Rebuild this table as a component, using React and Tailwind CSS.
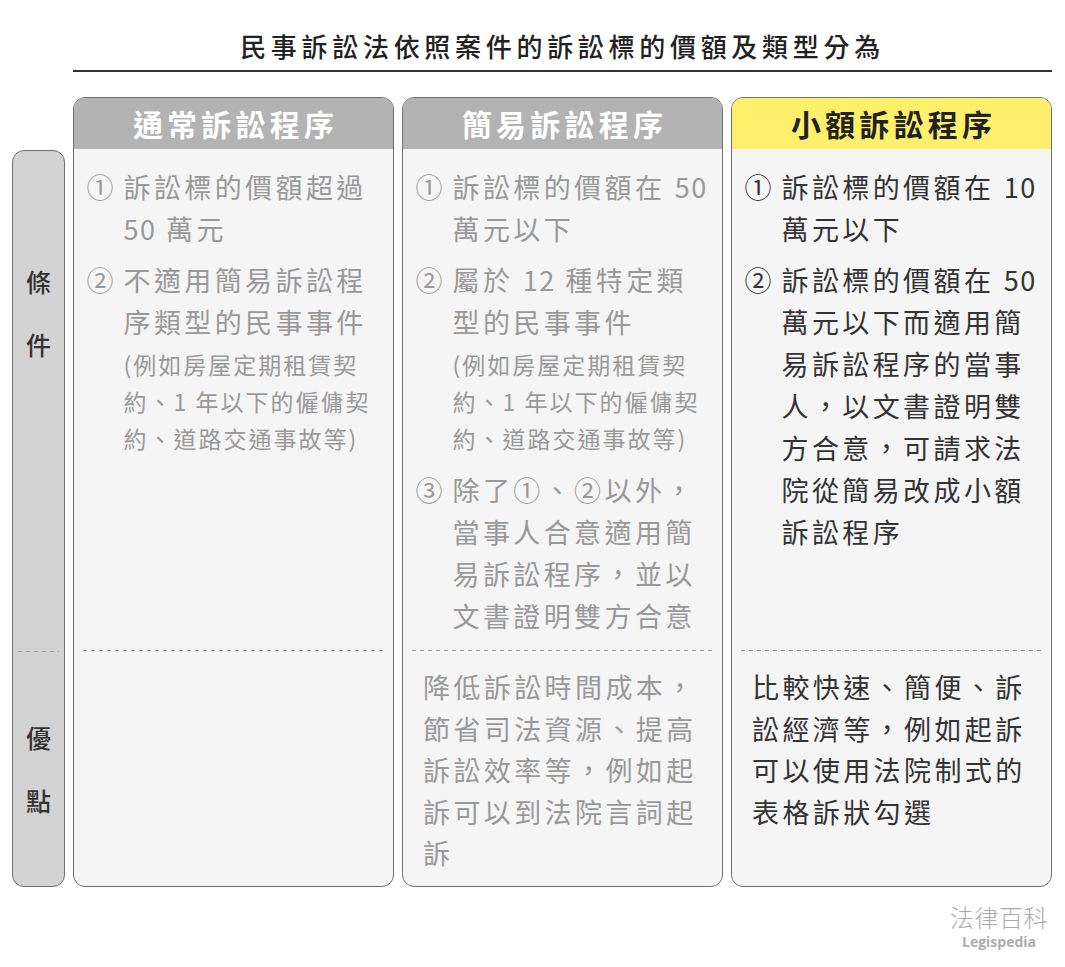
import React from "react";

const FONT = { fontFamily: '"Noto Sans CJK TC", "Noto Sans", sans-serif' };

function Lines({ lines }) {
  return (
    <div>
      {lines.map((l, i) => (
        <div key={i} className="whitespace-nowrap">{l}</div>
      ))}
    </div>
  );
}

const Num = ({ children }) => <span className="tracking-[1.6px]">{children}</span>;

function Item({ n, lines, paren, className = "" }) {
  return (
    <div className={`flex ${className}`}>
      <span className="w-[37px] shrink-0 tracking-normal">{n}</span>
      <div>
        <div className="text-[27px] leading-[42px] tracking-[3.4px]">
          <Lines lines={lines} />
        </div>
        {paren && (
          <div className="mt-[3px] text-[23px] leading-[37px] tracking-[2px]">
            <Lines lines={paren} />
          </div>
        )}
      </div>
    </div>
  );
}

const Dash = ({ className = "" }) => (
  <div
    className={`h-px bg-[repeating-linear-gradient(90deg,#9a9a9a_0_4px,transparent_4px_8px)] ${className}`}
  />
);

function Card({ title, yellow, dark, cond, adv }) {
  return (
    <div className="flex h-[790px] flex-col overflow-hidden rounded-[12px] border-[1.5px] border-[#707070] bg-[#f5f5f5]">
      <div
        className={`flex h-[51px] shrink-0 items-center justify-center pl-[4px] text-[30px] font-bold tracking-[4.2px] ${
          yellow ? "bg-[#fff06b] text-[#222222]" : "bg-[#b3b3b3] text-white"
        }`}
      >
        {title}
      </div>
      <div
        className={`h-[501px] shrink-0 pl-[12.5px] pt-[17px] text-[27px] leading-[42px] ${
          dark ? "text-[#333333]" : "text-[#999999]"
        }`}
      >
        {cond}
      </div>
      <Dash className="mx-[9px] shrink-0" />
      <div
        className={`flex-1 pl-[20px] pt-[15px] text-[27px] leading-[41.5px] tracking-[3.4px] ${
          dark ? "text-[#333333]" : "text-[#999999]"
        }`}
      >
        {adv && <Lines lines={adv} />}
      </div>
    </div>
  );
}

export default function App() {
  return (
    <div className="h-[967px] w-[1065px] bg-white pl-[12px] pr-[13px] pt-[28px]" style={FONT}>
      <div className="ml-[61px]">
        <div className="text-center text-[26px] font-medium leading-[36px] tracking-[4.7px] text-[#222222]">
          民事訴訟法依照案件的訴訟標的價額及類型分為
        </div>
        <div className="mt-[6px] h-[2px] bg-[#333333]" />
      </div>

      <div className="mt-[25px] grid grid-cols-[53px_1fr_1fr_1fr] gap-x-[8px]">
        <div className="mt-[53px] flex h-[737px] flex-col overflow-hidden rounded-[12px] border-[1.5px] border-[#707070] bg-[#d3d3d3] text-[25px] font-medium text-[#333333]">
          <div className="h-[500px] shrink-0 pt-[99px] text-center leading-[63px]">
            <div>條</div>
            <div>件</div>
          </div>
          <Dash className="mx-[5px] shrink-0" />
          <div className="flex flex-1 flex-col items-center justify-center leading-[63px]">
            <div>優</div>
            <div>點</div>
          </div>
        </div>

        <Card
          title="通常訴訟程序"
          cond={
            <>
              <Item n="①" lines={["訴訟標的價額超過", <><Num>50</Num> 萬元</>]} />
              <Item
                className="mt-[9px]"
                n="②"
                lines={["不適用簡易訴訟程", "序類型的民事事件"]}
                paren={["(例如房屋定期租賃契", "約、1 年以下的僱傭契", "約、道路交通事故等)"]}
              />
            </>
          }
        />

        <Card
          title="簡易訴訟程序"
          cond={
            <>
              <Item n="①" lines={[<>訴訟標的價額在 <Num>50</Num></>, "萬元以下"]} />
              <Item
                className="mt-[9px]"
                n="②"
                lines={[<>屬於 <Num>12</Num> 種特定類</>, "型的民事事件"]}
                paren={["(例如房屋定期租賃契", "約、1 年以下的僱傭契", "約、道路交通事故等)"]}
              />
              <Item
                className="mt-[12px]"
                n="③"
                lines={["除了①、②以外，", "當事人合意適用簡", "易訴訟程序，並以", "文書證明雙方合意"]}
              />
            </>
          }
          adv={["降低訴訟時間成本，", "節省司法資源、提高", "訴訟效率等，例如起", "訴可以到法院言詞起", "訴"]}
        />

        <Card
          title="小額訴訟程序"
          yellow
          dark
          cond={
            <>
              <Item n="①" lines={[<>訴訟標的價額在 <Num>10</Num></>, "萬元以下"]} />
              <Item
                className="mt-[9px]"
                n="②"
                lines={[
                  <>訴訟標的價額在 <Num>50</Num></>,
                  "萬元以下而適用簡",
                  "易訴訟程序的當事",
                  "人，以文書證明雙",
                  "方合意，可請求法",
                  "院從簡易改成小額",
                  "訴訟程序",
                ]}
              />
            </>
          }
          adv={["比較快速、簡便、訴", "訟經濟等，例如起訴", "可以使用法院制式的", "表格訴狀勾選"]}
        />
      </div>

      <div className="mt-[16px] flex justify-end pr-[4px]">
        <div className="flex flex-col items-center text-[#ababab]">
          <div className="text-[24px] font-light leading-[28px] tracking-[0.5px]">法律百科</div>
          <div
            className="mt-[2px] text-[14px] font-bold leading-[18px]"
            style={{ fontFamily: '"Open Sans", sans-serif' }}
          >
            Legispedia
          </div>
        </div>
      </div>
    </div>
  );
}
